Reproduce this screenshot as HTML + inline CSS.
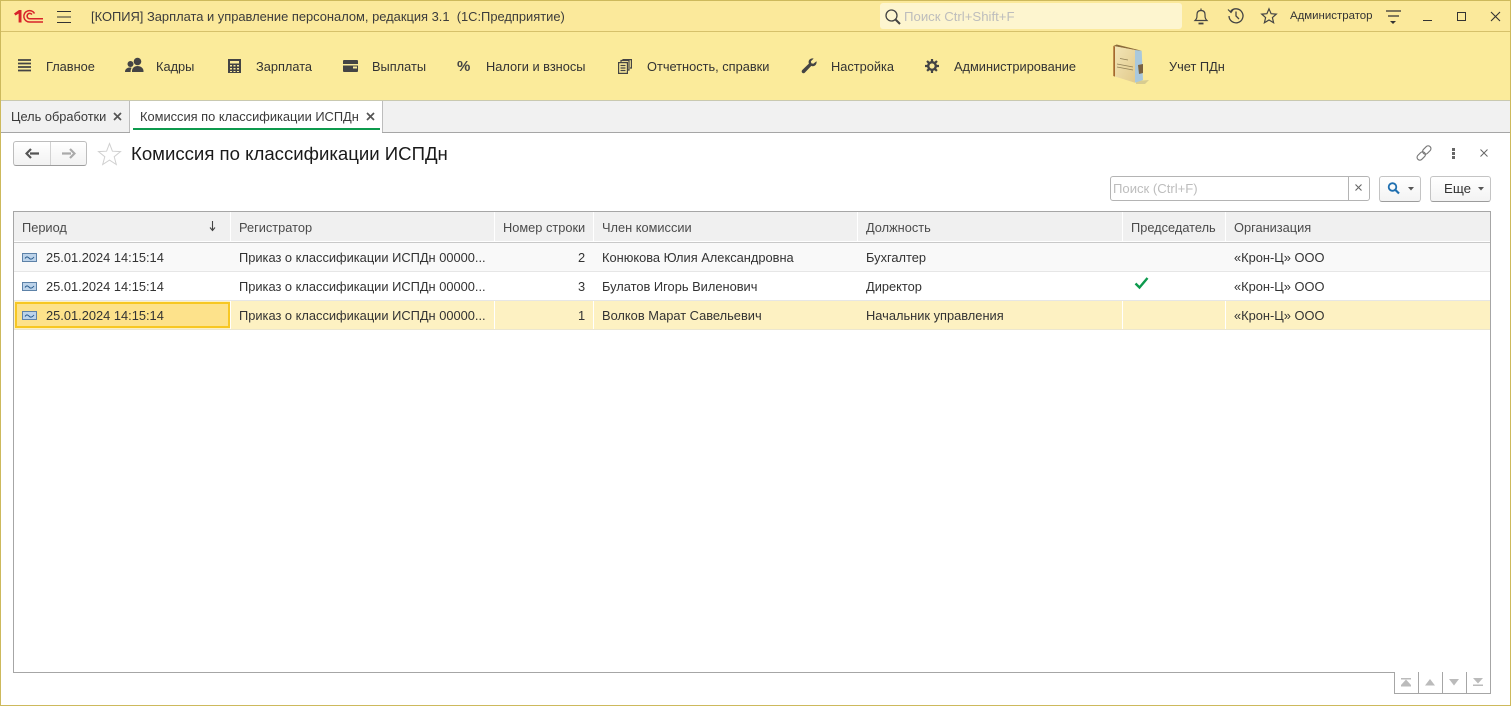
<!DOCTYPE html>
<html lang="ru"><head><meta charset="utf-8"><title>Комиссия</title>
<style>
html,body{margin:0;padding:0;width:1511px;height:707px;overflow:hidden;background:#fff}
body{position:relative;font-family:"Liberation Sans",Arial,sans-serif;font-size:12.85px;color:#333}
.a,.t,svg{position:absolute}
.t{white-space:nowrap;line-height:16px;height:16px}
.m{font-size:12.8px;color:#333}
.h{color:#4b4b4b;font-size:12.8px}
</style></head><body>
<!-- frame -->
<div class="a" style="left:0;top:0;width:1511px;height:31px;background:#fbe99b"></div>
<div class="a" style="left:0;top:31px;width:1511px;height:1px;background:#d6c16b"></div>
<div class="a" style="left:0;top:32px;width:1511px;height:68px;background:#fbeb9b"></div>
<div class="a" style="left:0;top:100px;width:1511px;height:1px;background:#c9c9b0"></div>
<div class="a" style="left:0;top:101px;width:1511px;height:31px;background:#f1f1f1"></div>
<div class="a" style="left:0;top:132px;width:1511px;height:1px;background:#a6a6a6"></div>
<!-- logo -->
<svg style="left:13px;top:8px" width="32" height="16" viewBox="0 0 32 16"><path d="M1 5.500 6 2h2.500v12.500H5.600V5.600L2.500 7.500z" fill="#d8232a"/><g fill="none" stroke="#d8232a" stroke-width="1.500"><path d="M30 14H16.500a5.700 5.700 0 1 1 5-8.500"/><path d="M30 10.800H16.800a2.700 2.700 0 1 1 2.200-4.300"/></g></svg>
<svg style="left:56px;top:10px" width="16" height="14"><path d="M1 1.500h14M1 7h14M1 12.500h14" stroke="#333" stroke-width="1.100"/></svg>
<div class="t" style="left:91px;top:9px;font-size:12.9px;color:#3c3c3c">[КОПИЯ] Зарплата и управление персоналом, редакция 3.1&nbsp; (1С:Предприятие)</div>
<!-- top search -->
<div class="a" style="left:880px;top:3px;width:302px;height:26px;background:#fdf5cf;border-radius:3px"></div>
<svg style="left:884px;top:8px" width="18" height="18"><circle cx="7.500" cy="7.500" r="5.500" fill="none" stroke="#444" stroke-width="1.300"/><path d="M11.500 11.500 16 16" stroke="#444" stroke-width="2"/></svg>
<div class="t" style="left:904px;top:9px;color:#bdbdbd;font-size:13.200px">Поиск Ctrl+Shift+F</div>
<!-- bell, history, star -->
<svg style="left:1193px;top:7px" width="18" height="19" fill="none" stroke="#444" stroke-width="1.200"><path d="M2 13.500h12c-2-2-2-3-2-6 0-2.500-1.500-4-4-4s-4 1.500-4 4c0 3 0 4-2 6zM8 1.500v2"/><path d="M5.500 16.500h5" stroke-width="1.800"/></svg>
<svg style="left:1227px;top:7px" width="18" height="18" fill="none" stroke="#444" stroke-width="1.300"><path d="M3.500 4.500A7 7 0 1 1 2 9"/><path d="M1 2.500 4 5.500 6.500 2" stroke-width="1.200"/><path d="M9 4.500v4.500l3 3"/></svg>
<svg style="left:1260px;top:7px" width="18" height="18"><path d="M9 1.800 11.100 6.700 16.300 7.100 12.400 10.600 13.600 15.800 9 13 4.400 15.800 5.600 10.600 1.700 7.100 6.900 6.700z" fill="none" stroke="#444" stroke-width="1.200"/></svg>
<div class="t" style="left:1290px;top:8px;font-size:11.450px;color:#333">Администратор</div>
<svg style="left:1385px;top:9px" width="18" height="16"><path d="M1 2h15M3 7h11" stroke="#333" stroke-width="1.200"/><path d="M5 12h6l-3 3z" fill="#333"/></svg>
<div class="a" style="left:1423px;top:20px;width:9px;height:1px;background:#333"></div>
<div class="a" style="left:1457px;top:12px;width:7px;height:7px;border:1.200px solid #333"></div>
<svg style="left:1490px;top:11px" width="11" height="11"><path d="M1 1l9 9M10 1l-9 9" stroke="#333" stroke-width="1.100"/></svg>
<!-- section panel -->
<svg style="left:17px;top:58px" width="15" height="15"><path d="M1 2h13M1 5.500h13M1 9h13M1 12.500h13" stroke="#444" stroke-width="1.700"/></svg>
<div class="t m" style="left:46px;top:59px">Главное</div>
<svg style="left:125px;top:57px" width="20" height="17" fill="#444"><circle cx="12.500" cy="4.500" r="3.800"/><path d="M7 14c0-3 2.500-5 5.500-5s6 2 6 5v1H7z"/><circle cx="5.500" cy="7" r="3"/><path d="M0 15c0-3 2-4.500 5.500-4.500 .8 0 1 .3 1 .6-.6.700-.9 2.200-.9 3.900z"/></svg>
<div class="t m" style="left:156px;top:59px">Кадры</div>
<svg style="left:228px;top:59px" width="13" height="14"><path fill="#444" fill-rule="evenodd" d="M0 0h13v14H0zM2 2v2.500h9V2zM2 6v1.500h2V6zm3.500 0v1.500h2V6zM9 6v1.500h2V6zM2 9v1.500h2V9zm3.500 0v1.500h2V9zM9 9v1.500h2V9zM2 12v1h2v-1zm3.500 0v1h2v-1zM9 12v1h2v-1z"/></svg>
<div class="t m" style="left:256px;top:59px">Зарплата</div>
<svg style="left:343px;top:60px" width="15" height="12"><path fill="#444" fill-rule="evenodd" d="M1 0h13a1 1 0 0 1 1 1v10a1 1 0 0 1-1 1H1a1 1 0 0 1-1-1V1a1 1 0 0 1 1-1zM0 4v1.500h15V4zm10 2.500v2h4v-2z"/></svg>
<div class="t m" style="left:372px;top:59px">Выплаты</div>
<div class="t" style="left:457px;top:59px;font-size:15px;font-weight:bold;color:#444">%</div>
<div class="t m" style="left:486px;top:59px">Налоги и взносы</div>
<svg style="left:618px;top:59px" width="14" height="15" fill="none" stroke="#444" stroke-width="1.200"><path d="M.6 3.600h8.800v10.800H.6zM3 3V1.500h8V11h-1M5 1V.6h8.400V9H12"/><path d="M2.500 6.500h5M2.500 9h5M2.500 11.500h5"/></svg>
<div class="t m" style="left:647px;top:59px">Отчетность, справки</div>
<svg style="left:801px;top:58px" width="16" height="16"><path fill="#444" d="M15.500 3.200c.5 2.300-1 5-3.800 5-.6 0-1-.1-1.400-.3L4 14.500c-1 1-2 1-2.800.2-.8-.8-.7-1.900.2-2.800l6.500-6.300c-.2-.5-.3-1-.3-1.500 0-2.600 2.700-4.200 5-3.500L9.900 3.300l.4 2 2 .5z"/></svg>
<div class="t m" style="left:831px;top:59px">Настройка</div>
<svg style="left:925px;top:59px" width="14" height="14"><circle cx="7" cy="7" r="3.800" fill="none" stroke="#444" stroke-width="2.400"/><path d="M7 0v14M0 7h14M2 2l10 10M12 2 2 12" stroke="#444" stroke-width="2.200" stroke-dasharray="2.600 8.800 2.600 20"/></svg>
<div class="t m" style="left:954px;top:59px">Администрирование</div>
<!-- book -->
<svg style="left:1112px;top:44px" width="40" height="44" viewBox="0 0 40 44">
<defs><linearGradient id="cv" x1="0" y1="0" x2="1" y2="1"><stop offset="0" stop-color="#f3e6b8"/><stop offset="1" stop-color="#e2ca8c"/></linearGradient></defs>
<path d="M24 37 L37 36 L33 40 L24 40z" fill="#cfc48d" opacity=".8"/>
<path d="M23 6 29.700 6.700 31 36 23 38.700z" fill="#a9c8dc"/>
<path d="M1.300 2 4.700 .5 29.700 6.700 23 6z" fill="#8a6a3a"/>
<path d="M1.300 2 23 6V38.700L1.300 32z" fill="url(#cv)"/>
<path d="M1.300 2 3 2.400V32.600L1.300 32z" fill="#a5692c"/>
<path d="M8 14.500l8 1.500M5 20l16 3M5 23l16 3" stroke="#8f7f55" stroke-width=".8"/>
<path d="M26 21 31 20 31 29 27 30z" fill="#7a6240"/>
</svg>
<div class="t m" style="left:1169px;top:59px">Учет ПДн</div>
<!-- tabs -->
<div class="t" style="left:11px;top:109px;font-size:12.800px;color:#3a3a3a">Цель обработки</div>
<svg style="left:113px;top:112px" width="9" height="9"><path d="M1 1l7 7M8 1 1 8" stroke="#555" stroke-width="1.700"/></svg>
<div class="a" style="left:129px;top:101px;width:1px;height:31px;background:#bdbdbd"></div>
<div class="a" style="left:130px;top:101px;width:252px;height:32px;background:#fff"></div>
<div class="a" style="left:382px;top:101px;width:1px;height:31px;background:#bdbdbd"></div>
<div class="t" style="left:140px;top:109px;font-size:12.850px;color:#3a3a3a">Комиссия по классификации ИСПДн</div>
<svg style="left:366px;top:112px" width="9" height="9"><path d="M1 1l7 7M8 1 1 8" stroke="#555" stroke-width="1.700"/></svg>
<div class="a" style="left:133px;top:128px;width:247px;height:2px;background:#0d9a4d"></div>
<!-- nav -->
<div class="a" style="left:13px;top:141px;width:72px;height:23px;border:1px solid #bdbdbd;border-bottom-color:#9c9c9c;border-radius:3px;background:linear-gradient(#fff,#f2f2f2)"></div>
<div class="a" style="left:50px;top:142px;width:1px;height:23px;background:#d2d2d2"></div>
<svg style="left:25px;top:148px" width="15" height="11"><path d="M14 5.500H5M6 1 1.500 5.500 6 10" fill="none" stroke="#555" stroke-width="2.200"/></svg>
<svg style="left:61px;top:148px" width="15" height="11"><path d="M1 5.500h9M9 1l4.500 4.500L9 10" fill="none" stroke="#aaa" stroke-width="2.200"/></svg>
<svg style="left:97px;top:142px" width="25" height="24"><path d="M12.500 1.500 15.400 9.200 23.500 9.600 17.200 14.700 19.300 22.500 12.500 18.100 5.700 22.500 7.800 14.700 1.500 9.600 9.600 9.200z" fill="#fff" stroke="#d0d0d0" stroke-width="1"/></svg>
<div class="t" style="left:131px;top:143px;height:22px;line-height:22px;font-size:18.600px;color:#1a1a1a">Комиссия по классификации ИСПДн</div>
<!-- right tools -->
<svg style="left:1415px;top:144px" width="18" height="18" fill="none" stroke="#777" stroke-width="1.100"><rect x="1.500" y="9.200" width="9.500" height="5.600" rx="2.800" transform="rotate(-45 6.200 12)"/><rect x="7" y="3.200" width="9.500" height="5.600" rx="2.800" transform="rotate(-45 11.800 6)"/></svg>
<div class="a" style="left:1452px;top:148px;width:3px;height:3px;background:#666;box-shadow:0 4px 0 #666,0 8px 0 #666"></div>
<svg style="left:1480px;top:149px" width="8" height="8"><path d="M.5.500l7 7M7.500.500l-7 7" stroke="#666" stroke-width="1"/></svg>
<!-- search -->
<div class="a" style="left:1110px;top:176px;width:258px;height:23px;border:1px solid #b4b4b4;border-radius:3px;background:#fff"></div>
<div class="a" style="left:1348px;top:177px;width:1px;height:23px;background:#b4b4b4"></div>
<div class="t" style="left:1113px;top:181px;color:#bdbdbd;font-size:13.100px">Поиск (Ctrl+F)</div>
<svg style="left:1355px;top:184px" width="7" height="7"><path d="M.5.500l6 6M6.500.500l-6 6" stroke="#666" stroke-width="1.100"/></svg>
<div class="a" style="left:1379px;top:176px;width:40px;height:24px;border:1px solid #c4c4c4;border-bottom-color:#9c9c9c;border-radius:3px;background:linear-gradient(#fff,#f3f3f3)"></div>
<svg style="left:1387px;top:182px" width="14" height="13"><circle cx="5.500" cy="5" r="3.800" fill="none" stroke="#1f6fb0" stroke-width="1.800"/><path d="M8.500 8l3.500 3.500" stroke="#1f6fb0" stroke-width="2.200"/></svg>
<svg style="left:1408px;top:187px" width="6" height="4"><path d="M0 0h6L3 3.500z" fill="#555"/></svg>
<div class="a" style="left:1430px;top:176px;width:59px;height:24px;border:1px solid #c4c4c4;border-bottom-color:#9c9c9c;border-radius:3px;background:linear-gradient(#fff,#f3f3f3)"></div>
<div class="t" style="left:1444px;top:181px;font-size:13.300px;color:#333">Еще</div>
<svg style="left:1478px;top:187px" width="6" height="4"><path d="M0 0h6L3 3.500z" fill="#555"/></svg>
<!-- table -->
<div class="a" style="left:13px;top:211px;width:1476px;height:460px;border:1px solid #a6a6a6;background:#fff"></div>
<div class="a" style="left:14px;top:212px;width:1476px;height:29px;background:#f0f0f0"></div>
<div class="a" style="left:14px;top:241px;width:1476px;height:1px;background:#fff"></div>
<div class="a" style="left:14px;top:242px;width:1476px;height:1px;background:#c9c9c9"></div>
<div class="a" style="left:14px;top:243px;width:1476px;height:28px;background:#f9f9f9"></div>
<div class="a" style="left:14px;top:271px;width:1476px;height:1px;background:#e6e6e6"></div>
<div class="a" style="left:14px;top:300px;width:1476px;height:1px;background:#e6e6e6"></div>
<div class="a" style="left:14px;top:301px;width:1476px;height:28px;background:#fdf1c2"></div>
<div class="a" style="left:14px;top:329px;width:1476px;height:1px;background:#ebe6d0"></div>
<!-- column separators: header + selected row -->
<div class="a" style="left:230px;top:212px;width:1px;height:29px;background:#fff"></div>
<div class="a" style="left:494px;top:212px;width:1px;height:29px;background:#fff"></div>
<div class="a" style="left:593px;top:212px;width:1px;height:29px;background:#fff"></div>
<div class="a" style="left:857px;top:212px;width:1px;height:29px;background:#fff"></div>
<div class="a" style="left:1122px;top:212px;width:1px;height:29px;background:#fff"></div>
<div class="a" style="left:1225px;top:212px;width:1px;height:29px;background:#fff"></div>
<div class="a" style="left:230px;top:301px;width:1px;height:28px;background:#fff"></div>
<div class="a" style="left:494px;top:301px;width:1px;height:28px;background:#fff"></div>
<div class="a" style="left:593px;top:301px;width:1px;height:28px;background:#fff"></div>
<div class="a" style="left:1122px;top:301px;width:1px;height:28px;background:#fff"></div>
<div class="a" style="left:1225px;top:301px;width:1px;height:28px;background:#fff"></div>
<!-- selected cell -->
<div class="a" style="left:15px;top:302px;width:211px;height:22px;border:2px solid #f7c723;background:#fde28b"></div>
<!-- header text -->
<div class="t h" style="left:22px;top:220px">Период</div>
<svg style="left:208px;top:220px" width="9" height="12"><path d="M4.500 1v9M2 7.500l2.500 3 2.500-3" fill="none" stroke="#444" stroke-width="1.100"/></svg>
<div class="t h" style="left:239px;top:220px">Регистратор</div>
<div class="t h" style="left:503px;top:220px">Номер строки</div>
<div class="t h" style="left:602px;top:220px">Член комиссии</div>
<div class="t h" style="left:866px;top:220px">Должность</div>
<div class="t h" style="left:1131px;top:220px">Председатель</div>
<div class="t h" style="left:1234px;top:220px">Организация</div>
<!-- row 1 -->
<svg style="left:22px;top:253px" width="15" height="9"><rect x=".5" y=".5" width="14" height="8" fill="#bcd3ea" stroke="#5d82a8"/><path d="M3 5.500c2-3 3.500-1 4.500 0s2.500 1 4.500-1.500" fill="none" stroke="#2a5d8f"/></svg>
<div class="t" style="left:46px;top:250px">25.01.2024 14:15:14</div>
<div class="t" style="left:239px;top:250px">Приказ о классификации ИСПДн 00000...</div>
<div class="t" style="left:578px;top:250px">2</div>
<div class="t" style="left:602px;top:250px">Конюкова Юлия Александровна</div>
<div class="t" style="left:866px;top:250px">Бухгалтер</div>
<div class="t" style="left:1234px;top:250px">«Крон-Ц» ООО</div>
<!-- row 2 -->
<svg style="left:22px;top:282px" width="15" height="9"><rect x=".5" y=".5" width="14" height="8" fill="#bcd3ea" stroke="#5d82a8"/><path d="M3 5.500c2-3 3.500-1 4.500 0s2.500 1 4.500-1.500" fill="none" stroke="#2a5d8f"/></svg>
<div class="t" style="left:46px;top:279px">25.01.2024 14:15:14</div>
<div class="t" style="left:239px;top:279px">Приказ о классификации ИСПДн 00000...</div>
<div class="t" style="left:578px;top:279px">3</div>
<div class="t" style="left:602px;top:279px">Булатов Игорь Виленович</div>
<div class="t" style="left:866px;top:279px">Директор</div>
<svg style="left:1134px;top:276px" width="15" height="14"><path d="M1.500 7.500 5.500 11.500 13.500 2" fill="none" stroke="#0e9a4e" stroke-width="2.400"/></svg>
<div class="t" style="left:1234px;top:279px">«Крон-Ц» ООО</div>
<!-- row 3 -->
<svg style="left:22px;top:311px" width="15" height="9"><rect x=".5" y=".5" width="14" height="8" fill="#bcd3ea" stroke="#5d82a8"/><path d="M3 5.500c2-3 3.500-1 4.500 0s2.500 1 4.500-1.500" fill="none" stroke="#2a5d8f"/></svg>
<div class="t" style="left:46px;top:308px">25.01.2024 14:15:14</div>
<div class="t" style="left:239px;top:308px">Приказ о классификации ИСПДн 00000...</div>
<div class="t" style="left:578px;top:308px">1</div>
<div class="t" style="left:602px;top:308px">Волков Марат Савельевич</div>
<div class="t" style="left:866px;top:308px">Начальник управления</div>
<div class="t" style="left:1234px;top:308px">«Крон-Ц» ООО</div>
<!-- pager -->
<div class="a" style="left:1394px;top:672px;width:95px;height:21px;border:1px solid #a6a6a6;border-top:none;background:#fff"></div>
<div class="a" style="left:1418px;top:672px;width:1px;height:21px;background:#a6a6a6"></div>
<div class="a" style="left:1442px;top:672px;width:1px;height:21px;background:#a6a6a6"></div>
<div class="a" style="left:1466px;top:672px;width:1px;height:21px;background:#a6a6a6"></div>
<svg style="left:1400px;top:678px" width="12" height="9" fill="#bbb"><path d="M1 0h10v1.500H1zM6 1.500 11 7H1zM1 7h10v1.500H1z"/></svg>
<svg style="left:1424px;top:679px" width="12" height="7" fill="#bbb"><path d="M6 0l5 6.500H1z"/></svg>
<svg style="left:1448px;top:679px" width="12" height="7" fill="#bbb"><path d="M1 0h10L6 6.500z"/></svg>
<svg style="left:1472px;top:678px" width="12" height="9" fill="#bbb"><path d="M1 0h10L6 5.500zM1 6.500h10V8H1z"/></svg>
<!-- outer border -->
<div class="a" style="left:0;top:0;width:1509px;height:704px;border:1px solid #cdb95c;pointer-events:none"></div>
</body></html>
